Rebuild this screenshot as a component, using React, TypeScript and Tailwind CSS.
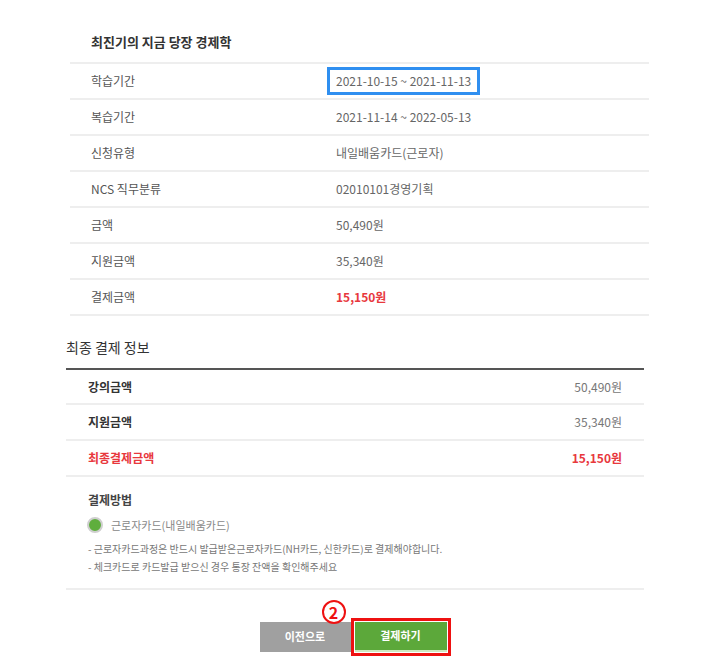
import React from "react";

const font = { fontFamily: '"Noto Sans CJK KR", "Noto Sans", sans-serif' };

const rows: { label: string; value: React.ReactNode; red?: boolean }[] = [
  { label: "학습기간", value: "2021-10-15 ~ 2021-11-13" },
  { label: "복습기간", value: "2021-11-14 ~ 2022-05-13" },
  { label: "신청유형", value: "내일배움카드(근로자)" },
  { label: "NCS 직무분류", value: "02010101경영기획" },
  { label: "금액", value: "50,490원" },
  { label: "지원금액", value: "35,340원" },
  { label: "결제금액", value: "15,150원", red: true },
];

export default function App() {
  return (
    <div className="w-[718px] h-[664px] bg-white overflow-hidden text-[#555]" style={font}>
      {/* Top section */}
      <div className="ml-[70px] w-[579px]">
        <div className="pt-[33px] pb-[11px] pl-[21px] border-b-2 border-[#eeeeee] text-[13px] leading-[18px] font-bold text-[#333]">
          최진기의 지금 당장 경제학
        </div>
        {rows.map((r, i) => (
          <div
            key={r.label}
            className="h-[36px] border-b-2 border-[#eeeeee] flex items-center pl-[21px] text-[12px]"
          >
            <div className="w-[245px] text-[#555]">{r.label}</div>
            {i === 0 ? (
              <div className="-ml-[9px] border-[3px] border-[#2f8ff0] px-[6px] h-[28px] flex items-center text-[#666]">
                {r.value}
              </div>
            ) : (
              <div className={r.red ? "text-[#e8383d] font-bold" : "text-[#666]"}>{r.value}</div>
            )}
          </div>
        ))}
      </div>

      {/* Final payment info */}
      <div className="ml-[66px] w-[578px]">
        <div className="mt-[21px] pb-[11px] text-[14px] leading-[20px] text-[#333]">최종 결제 정보</div>
        <div className="border-t-2 border-[#555]" />
        {[
          { l: "강의금액", v: "50,490원", h: "h-[35px]" },
          { l: "지원금액", v: "35,340원", h: "h-[36px]" },
          { l: "최종결제금액", v: "15,150원", h: "h-[36px]", red: true },
        ].map((r) => (
          <div
            key={r.l}
            className={`${r.h} border-b-2 border-[#eeeeee] flex items-center justify-between pl-[22px] pr-[22px] text-[12px]`}
          >
            <div className={r.red ? "font-bold text-[#e8383d]" : "font-bold text-[#333]"}>{r.l}</div>
            <div className={r.red ? "font-bold text-[#e8383d]" : "text-[#777]"}>{r.v}</div>
          </div>
        ))}

        <div className="pl-[22px] pt-[14px]">
          <div className="text-[12px] leading-[17px] font-bold text-[#444]">결제방법</div>
          <div className="mt-[9px] flex items-center gap-[8px]">
            <span className="w-[12px] h-[12px] rounded-full bg-[#5fae3d] border-[2px] border-[#cfcfcf] box-content -ml-[1px]" />
            <span className="text-[11px] text-[#888]">근로자카드(내일배움카드)</span>
          </div>
          <div className="mt-[6px] text-[10px] leading-[18px] text-[#777]">
            <div>- 근로자카드과정은 반드시 발급받은근로자카드(NH카드, 신한카드)로 결제해야합니다.</div>
            <div>- 체크카드로 카드발급 받으신 경우 통장 잔액을 확인해주세요</div>
          </div>
        </div>
        <div className="mt-[12px] border-t-2 border-[#eeeeee]" />

        <div className="relative flex justify-center items-center pt-[28px]">
          <div className="relative flex items-center">
            <div className="w-[91px] h-[30px] bg-[#a0a0a0] text-white text-[11px] font-bold flex items-center justify-center">
              이전으로
            </div>
            <div className="border-[3px] border-[#ee1111] p-[1px]">
              <div className="w-[92px] h-[30px] bg-[#5ca83a] text-white text-[11px] font-bold flex items-center justify-center border-b-2 border-[#cfe8c0]">
                결제하기
              </div>
            </div>
            <div className="absolute left-[62px] -top-[18px] w-[24px] h-[24px] rounded-full border-[2px] border-[#ee1111] bg-white flex items-center justify-center text-[#ee1111] text-[16px] font-bold leading-none">
              2
            </div>
          </div>
        </div>
      </div>
    </div>
  );
}
